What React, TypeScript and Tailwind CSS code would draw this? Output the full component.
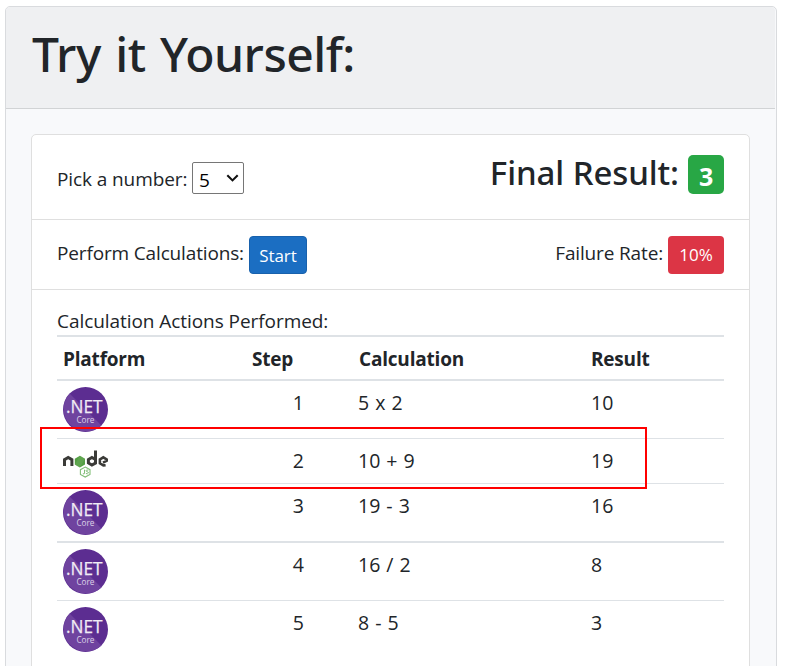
type Platform = "dotnet" | "node";

interface Action {
  platform: Platform;
  step: number;
  calculation: string;
  result: number;
  row: string;
}

const actions: Action[] = [
  { platform: "dotnet", step: 1, calculation: "5 x 2", result: 10, row: "h-[58px] border-b" },
  { platform: "node", step: 2, calculation: "10 + 9", result: 19, row: "h-[45px] border-b" },
  { platform: "dotnet", step: 3, calculation: "19 - 3", result: 16, row: "h-[59px] border-b-2" },
  { platform: "dotnet", step: 4, calculation: "16 / 2", result: 8, row: "h-[58px] border-b" },
  { platform: "dotnet", step: 5, calculation: "8 - 5", result: 3, row: "h-[58px]" },
];

function DotNetLogo() {
  return (
    <svg className="block size-[45px]" viewBox="0 0 45 45">
      <circle cx="22.5" cy="22.5" r="22.5" fill="#5c2d91" />
      <path d="M6.6 6.6 L38.4 38.4 A22.5 22.5 0 0 1 6.6 6.6Z" fill="#6f439f" />
      <text x="3" y="26.2" fill="#f1ecf5" stroke="#f1ecf5" strokeWidth=".25" fontFamily="Open Sans, sans-serif" fontSize="18" textLength="36.5" lengthAdjust="spacingAndGlyphs">.NET</text>
      <text x="13.4" y="35.5" fill="#ddd1e8" fontFamily="Open Sans, sans-serif" fontSize="8.6" textLength="18" lengthAdjust="spacingAndGlyphs">Core</text>
    </svg>
  );
}

function NodeLogo() {
  return (
    <svg className="mt-[5px] block h-[28px] w-[46px]" viewBox="0 0 46 28" fill="none">
      <g stroke="#3b3b38" strokeWidth="3">
        <path d="M1.5 16 V9.6 L5.2 7.4 L8.9 9.6 V16" />
        <path d="M32.5 .5 V13 L28.9 15 L25.4 13 V9.5 L28.9 7.4 L32.5 9.5" />
        <path d="M42.6 15.2 L40.4 15.4 L36.9 13.3 V9.5 L40.3 7.4 L43.7 9.5 V10.8 L40 12.6" strokeWidth="2.6" />
      </g>
      <path d="M16.9 5.8 L22 8.7 V14.5 L16.9 17.4 L11.8 14.5 V8.7Z" fill="#539e43" />
      <path d="M16.9 5.8 L22 8.7 L16.9 17.4 L11.8 14.5Z" fill="#6fae5f" fillOpacity=".45" />
      <path d="M22.2 17.1 L27 19.7 V24.4 L22.2 27 L17.4 24.4 V19.7Z" stroke="#80bd76" strokeWidth="1.1" />
      <path d="M21.5 19.7 V23.3 Q21.5 24.4 19.9 23.7 M25.3 20.2 Q23.1 19.5 23.1 20.7 Q23.1 21.5 24.2 21.7 Q25.5 21.9 25.4 23 Q24.8 24.3 22.9 23.5" stroke="#80bd76" strokeWidth="1" />
    </svg>
  );
}

const columns = "grid grid-cols-[189px_106px_233px_1fr]";

export default function App() {
  return (
    <div className="h-[666px] w-[785px] overflow-hidden bg-white pt-[6px] pl-[5px] font-['Open_Sans',sans-serif] text-[19px] leading-[30px] text-[#212529]">
      <div className="h-[700px] w-[772px] rounded-[5px] border border-[#d9dbde] bg-[#f8f9fb]">
        <header className="mr-px h-[102px] rounded-t-[4px] border-b border-[#d1d3d5] bg-[#eff0f2] pt-[17px] pl-[26px]">
          <h1 className="font-['Noto_Sans'] text-[48px] leading-[60px] font-medium tracking-[-0.5px] whitespace-nowrap [word-spacing:2.5px]">Try it Yourself:</h1>
        </header>

        <main className="mt-[25px] ml-[25px] h-[600px] w-[719px] rounded-[5px] border border-[#dfdfdf] bg-white">
          <section className="flex h-[85px] items-start justify-between border-b border-[#dfdfdf] px-[25px]">
            <div className="flex pt-[27px]">
              <span className="w-[131px] pt-[2px] tracking-[-0.1px] whitespace-nowrap">Pick a number:</span>
              <div className="relative ml-[4px]">
                <select
                  defaultValue="5"
                  className="block h-[32px] w-[52px] appearance-none rounded-[2px] border border-[#767676] bg-white pt-[3px] pl-[6px] text-[19px] leading-[26px] text-black"
                >
                  <option>5</option>
                </select>
                <svg className="pointer-events-none absolute top-[12px] right-[5px] h-[8px] w-[13px]" viewBox="0 0 13 8" fill="none" stroke="#101010" strokeWidth="2.1">
                  <path d="M1.3 1.3 L6.5 6.4 L11.7 1.3" />
                </svg>
              </div>
            </div>
            <h2 className="flex pt-[20px] font-['Noto_Sans'] text-[33px] leading-[36px] font-medium tracking-[-0.1px] whitespace-nowrap">
              Final Result:
              <span className="ml-[9px] h-[39px] w-[36px] rounded-[5px] bg-[#28a745] pt-[4px] text-center font-['Open_Sans'] text-[25px] leading-[34px] font-bold text-white">3</span>
            </h2>
          </section>

          <section className="flex h-[70px] justify-between border-b border-[#dfdfdf] px-[25px] pt-[16px]">
            <div className="flex">
              <span className="w-[188px] pt-[2px] tracking-[-0.15px] whitespace-nowrap">Perform Calculations:</span>
              <button className="ml-[4px] h-[38px] w-[58px] rounded-[4px] border border-[#1861ac] bg-[#1b6ec2] pt-px text-[17px] leading-[32px] tracking-[-0.1px] text-white">Start</button>
            </div>
            <div className="flex">
              <span className="pt-[2px] tracking-[-0.15px] whitespace-nowrap">Failure Rate:</span>
              <span className="ml-[5px] h-[38px] w-[56px] rounded-[4px] bg-[#dc3545] pt-[2px] text-center text-[17px] leading-[34px] text-white">10%</span>
            </div>
          </section>

          <section className="px-[25px] pt-[16px]">
            <p className="h-[29px] tracking-[-0.06px] whitespace-nowrap">Calculation Actions Performed:</p>
            <div className={`${columns} h-[46px] border-t-2 border-b-2 border-[#dee2e6] pt-[7px] font-bold tracking-[-0.2px]`}>
              <span className="pl-[6px]">Platform</span>
              <span className="pl-[6px]">Step</span>
              <span className="pl-[7px]">Calculation</span>
              <span className="pl-[6px]">Result</span>
            </div>
            {actions.map((a) => (
              <div key={a.step} className={`${columns} ${a.row} border-[#dee2e6] pt-[6px] text-[19.5px]`}>
                <span className="pl-[6px]">{a.platform === "dotnet" ? <DotNetLogo /> : <NodeLogo />}</span>
                <span className="pt-px pr-[48px] text-right">{a.step}</span>
                <span className="pt-px pl-[6px] [word-spacing:1px]">{a.calculation}</span>
                <span className="pt-px pl-[6px]">{a.result}</span>
              </div>
            ))}
          </section>
        </main>
      </div>
      {/* Highlight around the failed Node step */}
      <div className="absolute top-[427px] left-[40px] h-[62px] w-[607px] border-2 border-[#f00]" />
    </div>
  );
}
